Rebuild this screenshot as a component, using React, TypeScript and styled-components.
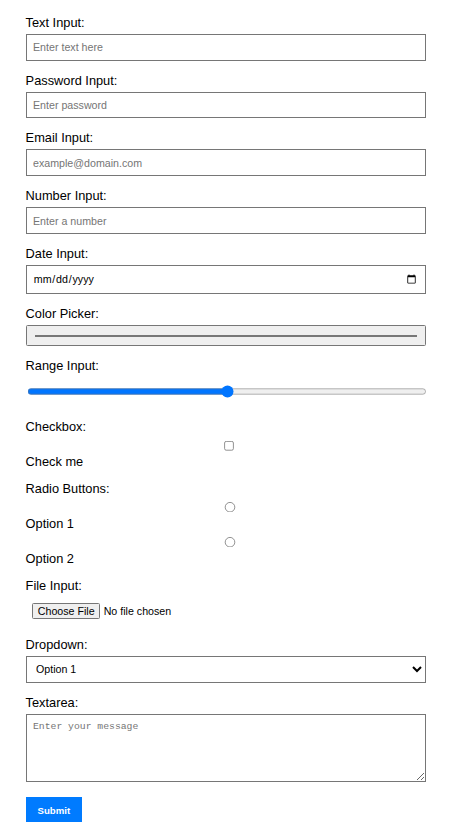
import styled, { createGlobalStyle, css } from "styled-components";

const GlobalStyle = createGlobalStyle`
  body {
    margin: 0;
    background-color: #ffffff;
  }
`;

// the whole form is drawn at 80% scale, native controls included
const Form = styled.form`
  zoom: 0.8;
  width: 500px;
  padding: 18.5px 0 0 32px;
  font-family: "Liberation Sans", Arial, sans-serif;
  font-size: 16px;
  color: #000;
`;

const Group = styled.div`
  margin-bottom: 15px;
`;

const Label = styled.label`
  display: block;
  margin-bottom: 5px;
  font-size: 16px;
`;

const fieldStyles = css`
  width: 100%;
  padding: 8px;
  box-sizing: border-box;
  font-family: "Liberation Sans", Arial, sans-serif;
  font-size: 13.33px;
`;

const Input = styled.input`
  ${fieldStyles}
`;

const Select = styled.select`
  ${fieldStyles}
`;

const TextArea = styled.textarea`
  ${fieldStyles}
  height: 85px;
  font-family: "Liberation Mono", "DejaVu Sans Mono", monospace;
  font-size: 12.2px;
`;

const SubmitButton = styled.button`
  padding: 10px 15px;
  border: none;
  background-color: #007bff;
  color: white;
  font-family: "Liberation Sans", Arial, sans-serif;
  font-size: 12px;
  font-weight: bold;
  cursor: pointer;
`;

const App = () => {
  return (
    <>
      <GlobalStyle />
      <Form onSubmit={(e) => e.preventDefault()}>
        <Group>
          <Label htmlFor="text">Text Input:</Label>
          <Input id="text" type="text" placeholder="Enter text here" />
        </Group>
        <Group>
          <Label htmlFor="password">Password Input:</Label>
          <Input id="password" type="password" placeholder="Enter password" />
        </Group>
        <Group>
          <Label htmlFor="email">Email Input:</Label>
          <Input id="email" type="email" placeholder="example@domain.com" />
        </Group>
        <Group>
          <Label htmlFor="number">Number Input:</Label>
          <Input id="number" type="number" placeholder="Enter a number" />
        </Group>
        <Group>
          <Label htmlFor="date">Date Input:</Label>
          <Input id="date" type="date" lang="en-GB" />
        </Group>
        <Group>
          <Label htmlFor="color">Color Picker:</Label>
          <Input id="color" type="color" />
        </Group>
        <Group>
          <Label htmlFor="range">Range Input:</Label>
          <Input id="range" type="range" min={0} max={100} />
        </Group>
        <Group>
          <Label>Checkbox:</Label>
          <Input id="checkbox" type="checkbox" />
          <Label htmlFor="checkbox">Check me</Label>
        </Group>
        <Group>
          <Label>Radio Buttons:</Label>
          <Input id="option1" type="radio" name="option" value="1" />
          <Label htmlFor="option1">Option 1</Label>
          <Input id="option2" type="radio" name="option" value="2" />
          <Label htmlFor="option2">Option 2</Label>
        </Group>
        <Group>
          <Label htmlFor="file">File Input:</Label>
          <Input id="file" type="file" />
        </Group>
        <Group>
          <Label htmlFor="dropdown">Dropdown:</Label>
          <Select id="dropdown">
            <option>Option 1</option>
            <option>Option 2</option>
            <option>Option 3</option>
          </Select>
        </Group>
        <Group>
          <Label htmlFor="message">Textarea:</Label>
          <TextArea id="message" placeholder="Enter your message" />
        </Group>
        <SubmitButton type="submit">Submit</SubmitButton>
      </Form>
    </>
  );
};

export default App;
